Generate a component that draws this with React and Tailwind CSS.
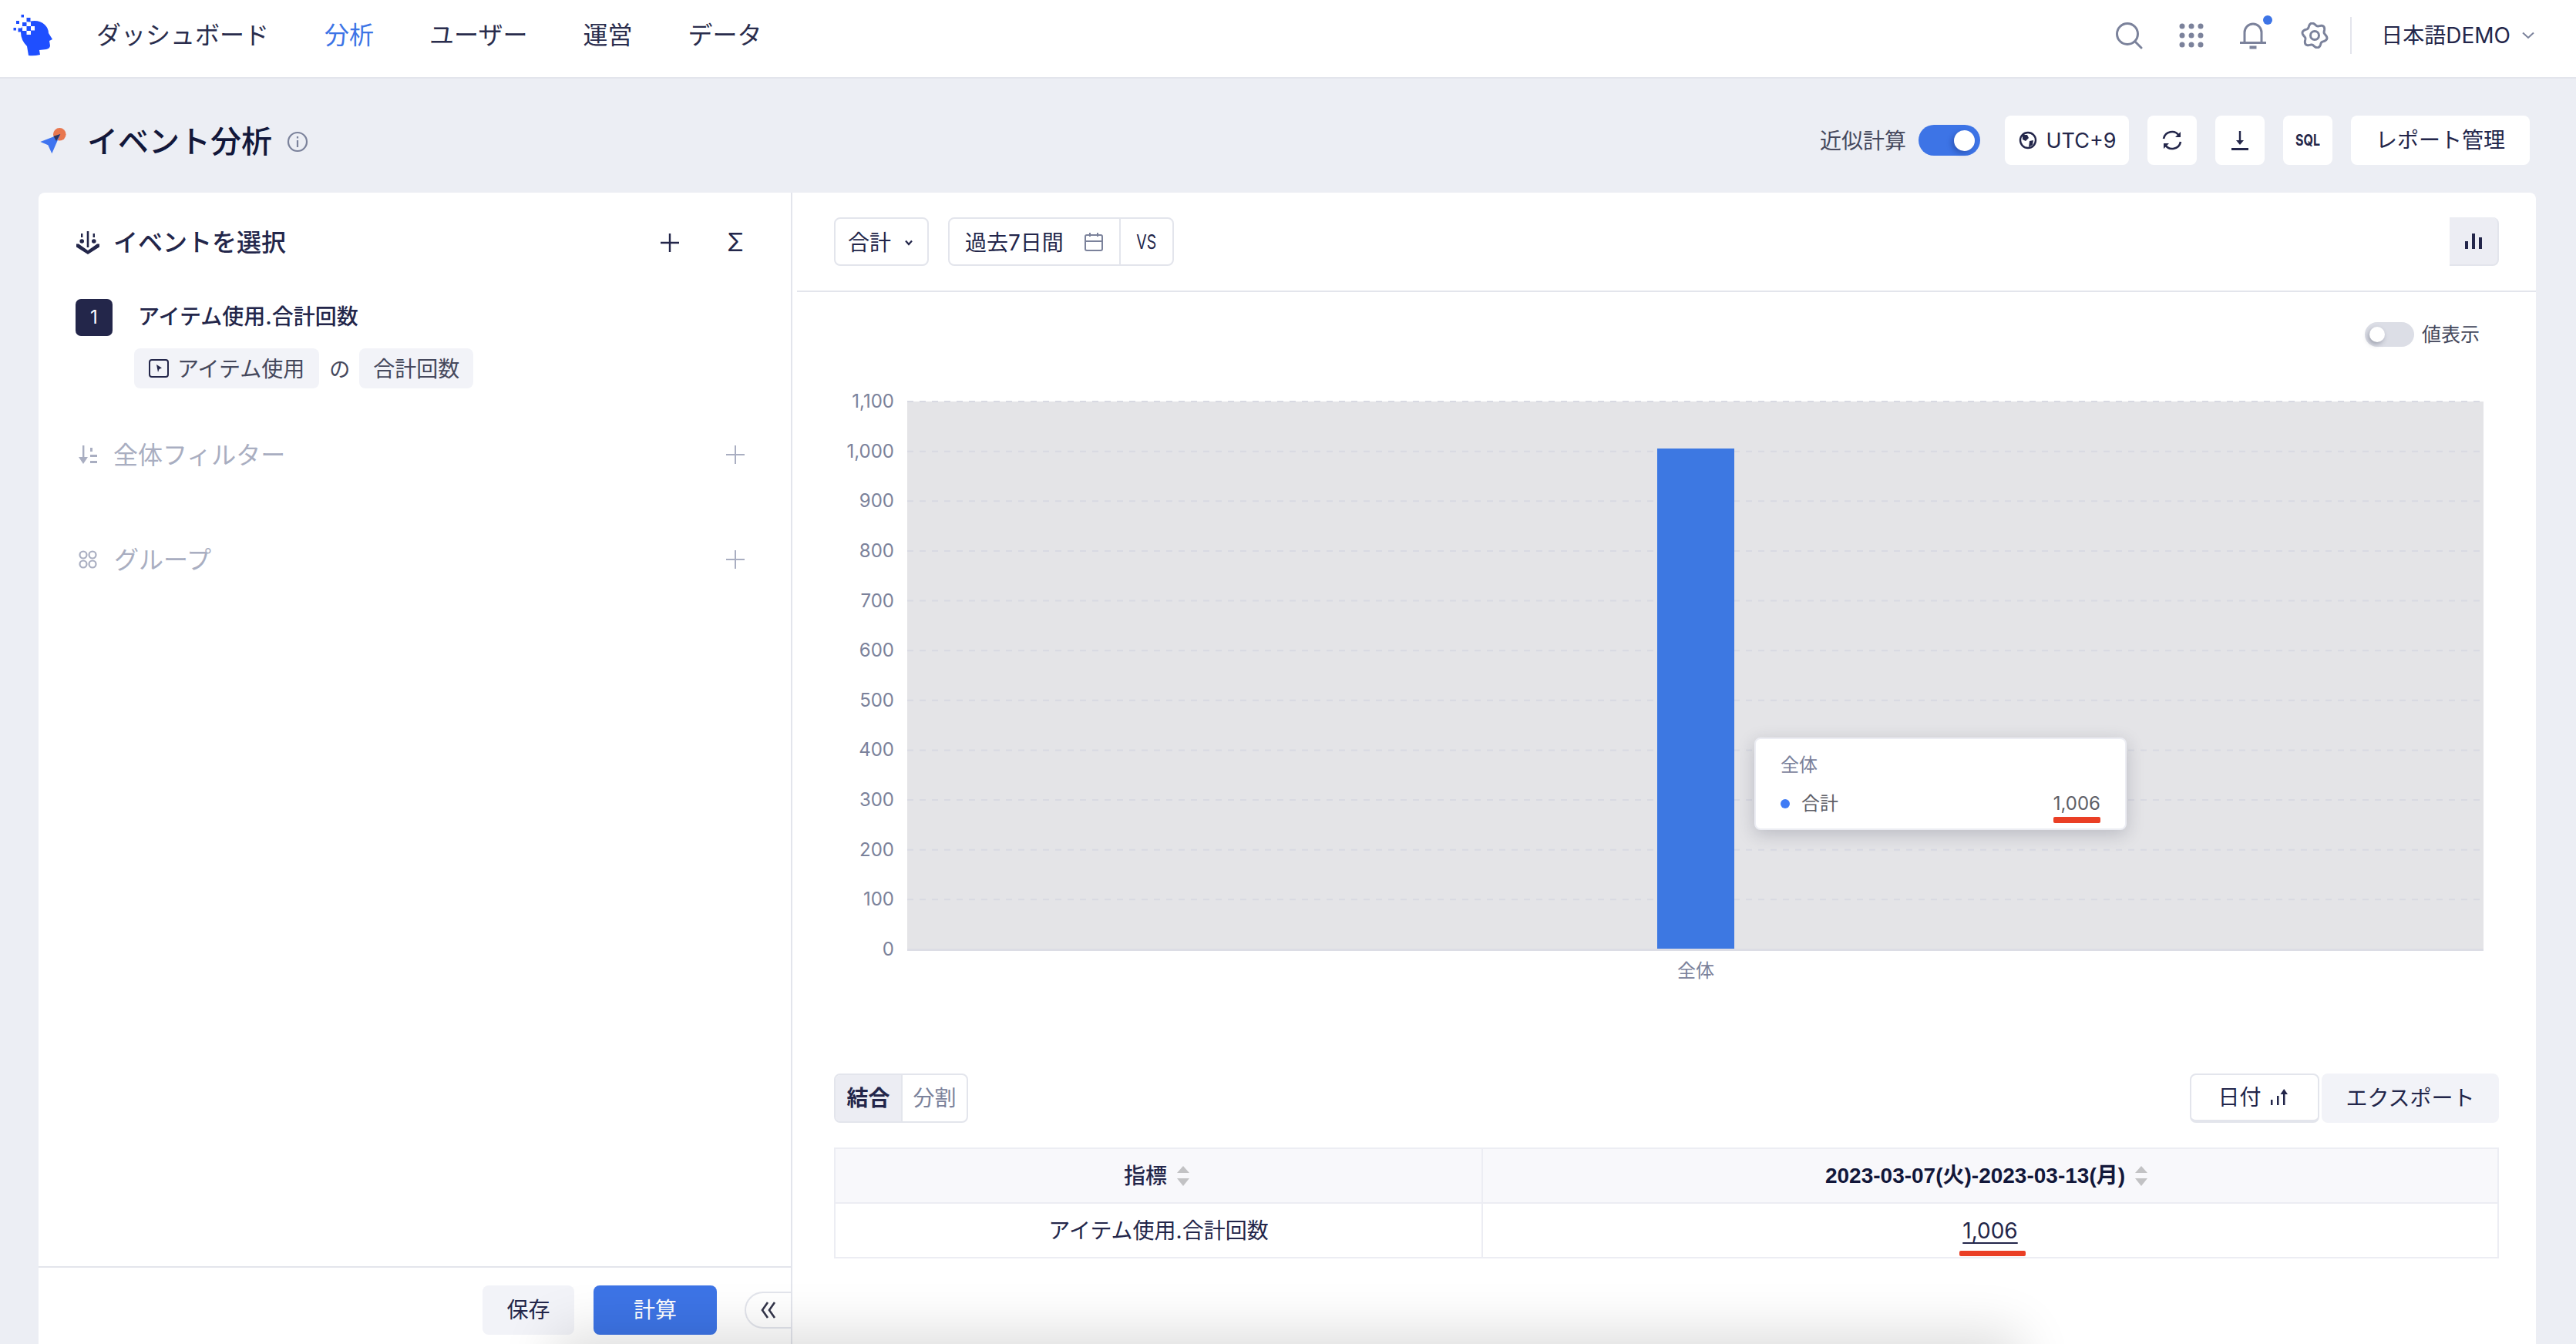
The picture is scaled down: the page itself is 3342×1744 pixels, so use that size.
import React from 'react';

const ticks = [0, 100, 200, 300, 400, 500, 600, 700, 800, 900, 1000, 1100];

const gearPath = (() => {
	const pts = [];
	for (let i = 0; i <= 120; i++) {
		const a = (i / 120) * Math.PI * 2;
		const r = 14.5 + 1.9 * Math.cos(6 * a + Math.PI / 2 * 3);
		pts.push(`${(18 + r * Math.cos(a)).toFixed(2)},${(17 + r * Math.sin(a)).toFixed(2)}`);
	}
	return pts.join(' ');
})();

const Logo = () => (
	<svg width="90" height="70" viewBox="0 0 90 70" className="shrink-0">
		<path
			d="M37 62 L35 50 Q27 42 27 32 Q27 21 38 18 Q50 15 58 22 Q63 27 63 33 L68 41 L64 43 L65 49 Q65 53 60 54 L51 55 L52 61 Q44 63 37 62 Z"
			fill="#1f4fff"
		/>
		<g fill="#1f4fff">
			<rect x="27.5" y="9" width="3.5" height="3.5" />
			<rect x="21" y="17" width="4" height="4" />
			<rect x="34.5" y="13" width="5" height="5.5" />
			<rect x="29" y="19" width="5.5" height="5" />
			<rect x="17.5" y="26" width="3.5" height="3.5" />
			<rect x="23.5" y="26.5" width="5" height="5" />
		</g>
		<g fill="#ffffff">
			<rect x="34.5" y="18.5" width="5.5" height="5.5" />
			<rect x="29" y="24" width="5.5" height="6" />
			<rect x="40" y="24" width="5" height="5.5" />
			<rect x="34.5" y="30" width="5.5" height="5" />
		</g>
	</svg>
);

const PlaneIcon = () => (
	<svg width="36" height="36" viewBox="0 0 36 36" className="shrink-0">
		<circle cx="26.3" cy="10.3" r="8.3" fill="#e8774f" />
		<path d="M27.3 10 L1.3 20 L11.3 24.3 L16.3 35.3 Z" fill="#3f74f0" />
		<path d="M27.3 10 L18.5 12.8 L22 19 Z" fill="#2c3560" />
	</svg>
);

const InfoIcon = () => (
	<svg width="28" height="28" viewBox="0 0 28 28" fill="none" stroke="#7b829b" strokeWidth="2.2" className="shrink-0">
		<circle cx="14" cy="14" r="12" />
		<path d="M14 12 V21 M14 7 V9.5" />
	</svg>
);

const HeaderIcons = () => (
	<div className="flex items-center">
		<svg width="36" height="36" viewBox="0 0 36 36" fill="none" stroke="#7b829b" strokeWidth="3">
			<circle cx="16" cy="16" r="13.5" />
			<path d="M26 26 L34 34" strokeLinecap="round" />
		</svg>
		<svg width="32" height="32" viewBox="0 0 32 32" fill="#7b829b" className="ml-[47px]">
			{[4, 16, 28].map(y => [4, 16, 28].map(x => <circle key={`${x}-${y}`} cx={x} cy={y} r="3.5" />))}
		</svg>
		<div className="relative ml-[46px] h-[36px] w-[36px]">
			<svg width="36" height="36" viewBox="0 0 36 36" fill="none" stroke="#7b829b" strokeWidth="3">
				<path d="M7 27 V14 a11 11 0 0 1 22 0 V27" />
				<path d="M1 27.5 H35" />
				<path d="M13.5 33.5 H22.5" strokeWidth="4" />
			</svg>
			<span className="absolute right-[-7px] top-[-8px] h-[12px] w-[12px] rounded-full bg-[#3d74e6]" />
		</div>
		<svg width="36" height="34" viewBox="0 0 36 34" fill="none" stroke="#7b829b" strokeWidth="3" className="ml-[44px]">
			<polygon points={gearPath} />
			<circle cx="18" cy="17" r="5.5" />
		</svg>
	</div>
);

const SmallButton = ({ children, className }) => (
	<button className={`flex h-[64px] items-center justify-center rounded-[8px] bg-white ${className}`}>{children}</button>
);

const Toolbar = () => (
	<div className="flex items-center text-[#23264a]">
		<span className="mt-[2px] text-[28px] leading-none text-[#45485c]">近似計算</span>
		<div className="ml-[16px] flex h-[40px] w-[80px] items-center justify-end rounded-full bg-[#3d74e6] pr-[7px]">
			<span className="h-[27px] w-[27px] rounded-full bg-white shadow-[-3px_3px_6px_rgba(20,40,110,0.35)]" />
		</div>
		<SmallButton className="ml-[32px] w-[161px] gap-[11px] pl-[2px]">
			<svg width="24" height="24" viewBox="0 0 24 24" fill="none">
				<circle cx="12" cy="12" r="10" stroke="#23264a" strokeWidth="2.4" />
				<path d="M5 5 L11 5 L13 9 L9 13 L5 11 Z M14 13 L19 12 L18 18 L13 21 Z" fill="#23264a" />
			</svg>
			<span className="text-[27px] leading-none">UTC+9</span>
		</SmallButton>
		<SmallButton className="ml-[24px] w-[64px]">
			<svg width="28" height="28" viewBox="0 0 28 28" fill="none" stroke="#23264a" strokeWidth="2.6">
				<path d="M3 12 A11 11 0 0 1 23 8" />
				<path d="M25 16 A11 11 0 0 1 5 20" />
				<path d="M25 3 V10 H18 Z M3 25 V18 H10 Z" fill="#23264a" stroke="none" />
			</svg>
		</SmallButton>
		<SmallButton className="ml-[24px] w-[64px]">
			<svg width="24" height="26" viewBox="0 0 24 26" fill="none" stroke="#23264a" strokeWidth="2.4">
				<path d="M12 1 V16" />
				<path d="M7 13 H17 L12 19 Z" fill="#23264a" stroke="none" />
				<path d="M1 24.5 H23" strokeWidth="3" />
			</svg>
		</SmallButton>
		<SmallButton className="ml-[24px] w-[64px]">
			<span className="scale-x-[0.8] text-[20px] font-bold leading-none">SQL</span>
		</SmallButton>
		<SmallButton className="ml-[24px] w-[232px]">
			<span className="text-[28px] leading-none">レポート管理</span>
		</SmallButton>
	</div>
);

const TopBar = () => (
	<header className="flex h-[102px] shrink-0 items-center border-b-2 border-[#e3e5ec] bg-white pb-[8px]">
		<div className="-mt-[2px]">
			<Logo />
		</div>
		<nav className="ml-[35px] flex items-center gap-[72px] text-[32px] leading-none text-[#2a2d4d]">
			<span>ダッシュボード</span>
			<span className="text-[#3d74e6]">分析</span>
			<span>ユーザー</span>
			<span>運営</span>
			<span>データ</span>
		</nav>
		<div className="ml-auto flex items-center">
			<HeaderIcons />
			<div className="ml-[28px] h-[48px] w-[2px] bg-[#e3e5ec]" />
			<span className="ml-[38px] text-[28px] leading-none text-[#23264a]">日本語DEMO</span>
			<svg width="16" height="10" viewBox="0 0 16 10" fill="none" stroke="#7b829b" strokeWidth="2" className="ml-[15px] mr-[54px]">
				<path d="M1 1.5 L8 8 L15 1.5" />
			</svg>
		</div>
	</header>
);

const PlusIcon = ({ color = '#a9aec1', size = 24, width = 2 }) => (
	<svg width={size} height={size} viewBox="0 0 24 24" stroke={color} strokeWidth={width} className="shrink-0">
		<path d="M12 0 V24 M0 12 H24" />
	</svg>
);

const EventPanel = () => (
	<div className="flex-1 pl-[48px] pr-[60px] pt-[46px]">
		<div className="flex h-[38px] items-center">
			<svg width="30" height="30" viewBox="0 0 30 30" className="ml-[1px] shrink-0" fill="#23264a">
				<rect x="13.7" y="0" width="2.6" height="21" />
				<rect x="6" y="3" width="2.4" height="5" />
				<circle cx="7.2" cy="13" r="2.8" />
				<rect x="21.6" y="3" width="2.4" height="5" />
				<circle cx="22.8" cy="13" r="2.8" />
				<path d="M0 16.5 L3 16.5 L15 25 L27 16.5 L30 16.5 L30 20.5 L15 30 L0 20.5 Z" />
			</svg>
			<span className="ml-[18px] -mt-[1px] text-[32px] font-medium leading-none text-[#23264a]">イベントを選択</span>
			<div className="ml-auto flex items-center">
				<PlusIcon color="#23264a" width={2.4} />
				<span className="ml-[62px] mr-[1px] text-[32px] leading-none text-[#23264a]">Σ</span>
			</div>
		</div>
		<div className="mt-[54px] flex items-center">
			<span className="flex h-[48px] w-[48px] items-center justify-center rounded-[7px] bg-[#23264a] text-[24px] leading-none text-white">1</span>
			<span className="-mt-[3px] ml-[33px] text-[28px] font-medium leading-none text-[#23264a]">アイテム使用.合計回数</span>
		</div>
		<div className="ml-[76px] mt-[16px] flex items-center text-[#45485c]">
			<span className="flex h-[52px] items-center rounded-[8px] bg-[#f2f3f8] pl-[19px] pr-[19px]">
				<svg width="26" height="24" viewBox="0 0 26 24" fill="none" stroke="#23264a" strokeWidth="2">
					<rect x="1" y="1" width="24" height="22" rx="3" />
					<path d="M10 7 L17 11.5 L13.5 13 L12 17 Z" fill="#23264a" stroke="none" />
				</svg>
				<span className="ml-[11px] mt-[2px] text-[28px] leading-none">アイテム使用</span>
			</span>
			<span className="ml-[13px] mt-[2px] text-[27px] leading-none">の</span>
			<span className="ml-[12px] flex h-[52px] items-center rounded-[8px] bg-[#f2f3f8] px-[18px] pt-[2px] text-[28px] leading-none">合計回数</span>
		</div>
		<div className="mt-[62px] flex h-[48px] items-center text-[#a9aec1]">
			<svg width="24" height="24" viewBox="0 0 24 24" className="ml-[4px] shrink-0" fill="#a9aec1">
				<rect x="5" y="0" width="2.4" height="20" />
				<path d="M0 15 H12 L6 24 Z" />
				<rect x="15" y="3" width="3" height="5" />
				<rect x="15" y="12" width="9" height="3" />
				<rect x="15" y="20" width="9" height="3" />
			</svg>
			<span className="ml-[21px] mt-[2px] text-[32px] leading-none">全体フィルター</span>
			<div className="ml-auto">
				<PlusIcon />
			</div>
		</div>
		<div className="mt-[88px] flex h-[48px] items-center text-[#a9aec1]">
			<svg width="24" height="24" viewBox="0 0 24 24" className="ml-[4px] shrink-0" fill="none" stroke="#a9aec1" strokeWidth="2.2">
				<circle cx="6" cy="6" r="4.5" />
				<circle cx="18" cy="6" r="4.5" />
				<circle cx="6" cy="18" r="4.5" />
				<circle cx="18" cy="18" r="4.5" />
			</svg>
			<span className="ml-[22px] mt-[2px] text-[32px] leading-none">グループ</span>
			<div className="ml-auto">
				<PlusIcon />
			</div>
		</div>
	</div>
);

const PanelFooter = () => (
	<div className="relative flex h-[101px] shrink-0 items-start justify-end border-t-2 border-[#e3e5ec] pr-[96px] pt-[23px]">
		<button className="flex h-[64px] w-[119px] items-center justify-center rounded-[8px] bg-[#f2f3f8] text-[28px] leading-none text-[#23264a]">保存</button>
		<button className="ml-[25px] flex h-[64px] w-[160px] items-center justify-center rounded-[8px] bg-[#3d74e6] text-[28px] leading-none text-white">計算</button>
		<button className="absolute right-0 top-[31px] flex h-[48px] w-[60px] items-center justify-start rounded-l-full border-2 border-r-0 border-[#e3e5ec] bg-white pl-[19px]">
			<svg width="20" height="22" viewBox="0 0 20 22" fill="none" stroke="#33354a" strokeWidth="2.6">
				<path d="M9 1 L2 11 L9 21 M18 1 L11 11 L18 21" />
			</svg>
		</button>
	</div>
);

const ChartHeader = () => (
	<div className="ml-[6px] flex h-[129px] shrink-0 items-start border-b-2 border-[#e3e5ec] pl-[48px] pr-[48px] pt-[32px]">
		<div className="flex h-[63px] w-[123px] items-center rounded-[8px] border-2 border-[#e3e5ec] pl-[16px] pt-[3px] text-[28px] leading-none text-[#23264a]">
			合計
			<svg width="10" height="8" viewBox="0 0 10 8" fill="none" stroke="#23264a" strokeWidth="2.2" className="ml-[18px]">
				<path d="M1 1.5 L5 6 L9 1.5" />
			</svg>
		</div>
		<div className="ml-[25px] flex h-[63px] w-[293px] items-center rounded-[8px] border-2 border-[#e3e5ec] text-[#23264a]">
			<span className="ml-[20px] mt-[3px] text-[28px] leading-none">過去7日間</span>
			<svg width="24" height="24" viewBox="0 0 24 24" fill="none" stroke="#7b829b" strokeWidth="2" className="ml-[27px] mt-[1px]">
				<rect x="1" y="3" width="22" height="20" rx="2" />
				<path d="M1 11 H23 M7 0 V5 M17 0 V5" />
			</svg>
			<div className="ml-[21px] flex h-full flex-1 items-center justify-center border-l-2 border-[#e3e5ec]">
				<span className="scale-x-[0.75] text-[26px] leading-none">VS</span>
			</div>
		</div>
		<div className="ml-auto flex h-[63px] w-[64px] items-center justify-center rounded-r-[8px] border-b-2 border-r-2 border-[#e3e5ec] bg-[#ecedf3]">
			<svg width="22" height="20" viewBox="0 0 22 20" fill="#23264a">
				<rect x="0" y="10" width="4" height="10" />
				<rect x="9" y="0" width="4" height="20" />
				<rect x="18" y="5" width="4" height="15" />
			</svg>
		</div>
	</div>
);

const ValueToggle = () => (
	<div className="mt-[39px] flex h-[32px] shrink-0 items-center justify-end pr-[73px]">
		<div className="flex h-[32px] w-[64px] items-center rounded-full bg-[#dcdee6] pl-[6px]">
			<span className="h-[20px] w-[20px] rounded-full bg-white shadow-[-2px_3px_6px_rgba(40,45,70,0.35)]" />
		</div>
		<span className="ml-[10px] text-[25px] leading-none text-[#45485c]">値表示</span>
	</div>
);

const Chart = () => (
	<div className="relative mt-[50px] h-[790px] shrink-0">
		<svg width="2262" height="790" viewBox="0 0 2262 790">
			<rect x="149" y="21" width="2045" height="711" fill="#e4e4e7" />
			{ticks.map(v => {
				const y = 732 - (v / 1100) * 711;
				return (
					<g key={v}>
						{v > 0 && <line x1="149" x2="2194" y1={y} y2={y} stroke="#d8d9e2" strokeWidth="2" strokeDasharray="8 8" />}
						<text x="132" y={y + 8} textAnchor="end" fill="#7b829b" className="text-[24px]">
							{v.toLocaleString('en-US')}
						</text>
					</g>
				);
			})}
			<rect x="1122" y="82" width="100" height="650" fill="#3d78e2" />
			<rect x="149" y="731" width="2045" height="3" fill="#dcdde5" />
			<text x="1172" y="768" textAnchor="middle" fill="#7b829b" className="text-[24px]">
				全体
			</text>
		</svg>
		<div className="absolute left-[1248px] top-[457px] h-[120px] w-[483px] rounded-[8px] border-2 border-[#ecedf3] bg-white pl-[32px] pr-[32px] shadow-[0_6px_22px_rgba(40,45,70,0.22)]">
			<div className="mt-[22px] text-[24px] leading-none text-[#7b829b]">全体</div>
			<div className="mt-[26px] flex items-center text-[24px] leading-none text-[#5e5e66]">
				<span className="h-[12px] w-[12px] rounded-full bg-[#3f7bf5]" />
				<span className="ml-[15px]">合計</span>
				<span className="relative ml-auto">
					1,006
					<span className="absolute bottom-[-13px] left-0 h-[8px] w-full rounded-[2px] bg-[#ea3f25]" />
				</span>
			</div>
		</div>
	</div>
);

const SortIcon = () => (
	<svg width="16" height="26" viewBox="0 0 16 26" fill="#c2c2c4" className="ml-[13px] shrink-0">
		<path d="M8 0 L16 9 H0 Z M8 26 L0 16 H16 Z" />
	</svg>
);

const ResultTable = () => (
	<div className="flex-1 pl-[54px] pr-[48px]">
		<div className="mt-[103px] flex h-[64px] items-start justify-between">
			<div className="flex h-[64px] w-[174px] overflow-hidden rounded-[8px] border-2 border-[#e3e5ec] text-[28px] leading-none">
				<span className="flex w-[87px] items-center justify-center border-r-2 border-[#e3e5ec] bg-[#ecedf3] font-bold text-[#23264a]">結合</span>
				<span className="flex flex-1 items-center justify-center text-[#7b829b]">分割</span>
			</div>
			<div className="flex">
				<button className="flex h-[64px] w-[168px] items-center justify-center rounded-[8px] border-2 border-b-[4px] border-[#e3e5ec] pr-[4px] text-[28px] leading-none text-[#23264a]">
					日付
					<svg width="24" height="22" viewBox="0 0 24 22" fill="#23264a" className="ml-[11px]">
						<rect x="1" y="14" width="2.5" height="7" />
						<rect x="9" y="9" width="2.5" height="12" />
						<rect x="17" y="6" width="2.5" height="15" />
						<path d="M18.2 0 L23 7 H13.5 Z" />
					</svg>
				</button>
				<button className="ml-[3px] flex h-[64px] w-[230px] items-center justify-center rounded-[8px] bg-[#f2f3f8] text-[28px] leading-none text-[#23264a]">エクスポート</button>
			</div>
		</div>
		<table className="mt-[32px] w-[2160px] table-fixed border-collapse border-2 border-[#ecedf3] text-[28px] leading-none text-[#23264a]">
			<colgroup>
				<col className="w-[840px]" />
				<col />
			</colgroup>
			<thead>
				<tr className="h-[71px] bg-[#f8f8fb]">
					<th className="border-2 border-[#ecedf3] font-medium">
						<span className="flex items-center justify-center pr-[5px]">
							指標
							<SortIcon />
						</span>
					</th>
					<th className="border-2 border-[#ecedf3] font-semibold">
						<span className="flex items-center justify-center pr-[10px] font-['Liberation_Sans','Noto_Sans_CJK_JP',sans-serif] text-[#12173a]">
							2023-03-07(火)-2023-03-13(月)
							<SortIcon />
						</span>
					</th>
				</tr>
			</thead>
			<tbody>
				<tr className="h-[71px]">
					<td className="border-2 border-[#ecedf3] text-center">アイテム使用.合計回数</td>
					<td className="border-2 border-[#ecedf3] text-center">
						<span className="relative underline underline-offset-[5px]">
							1,006
							<span className="absolute bottom-[-16px] left-[-4px] right-[-10px] h-[7px] rounded-[2px] bg-[#ea3f25]" />
						</span>
					</td>
				</tr>
			</tbody>
		</table>
	</div>
);

const App = () => (
	<div className="relative flex h-[1744px] w-[3342px] flex-col overflow-hidden bg-[#eceef4] font-['Inter','Noto_Sans_CJK_JP',sans-serif]">
		<TopBar />
		<div className="flex h-[148px] shrink-0 items-start pl-[51px] pr-[60px] pt-[48px]">
			<div className="flex h-[64px] items-center">
				<PlaneIcon />
				<span className="ml-[26px] mt-[4px] text-[40px] font-medium leading-none text-[#12173a]">イベント分析</span>
				<div className="ml-[19px] mt-[4px]">
					<InfoIcon />
				</div>
			</div>
			<div className="ml-auto">
				<Toolbar />
			</div>
		</div>
		<div className="ml-[50px] mr-[52px] flex min-h-0 flex-1 overflow-hidden rounded-t-[8px] bg-white">
			<div className="flex w-[978px] shrink-0 flex-col border-r-2 border-[#e3e5ec]">
				<EventPanel />
				<PanelFooter />
			</div>
			<div className="flex min-w-0 flex-1 flex-col">
				<ChartHeader />
				<ValueToggle />
				<Chart />
				<ResultTable />
			</div>
		</div>
		<div className="pointer-events-none absolute left-[760px] top-[1770px] h-[40px] w-[1820px] bg-black/30 shadow-[0_0_70px_40px_rgba(0,0,0,0.14)]" />
	</div>
);

export default App;
